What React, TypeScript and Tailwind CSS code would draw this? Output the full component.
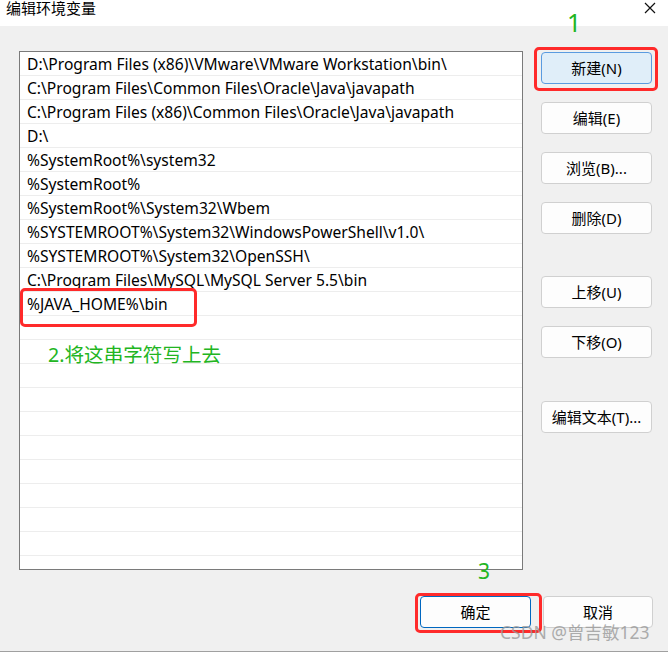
import React from "react";

const rows = [
  "D:\\Program Files (x86)\\VMware\\VMware Workstation\\bin\\",
  "C:\\Program Files\\Common Files\\Oracle\\Java\\javapath",
  "C:\\Program Files (x86)\\Common Files\\Oracle\\Java\\javapath",
  "D:\\",
  "%SystemRoot%\\system32",
  "%SystemRoot%",
  "%SystemRoot%\\System32\\Wbem",
  "%SYSTEMROOT%\\System32\\WindowsPowerShell\\v1.0\\",
  "%SYSTEMROOT%\\System32\\OpenSSH\\",
  "C:\\Program Files\\MySQL\\MySQL Server 5.5\\bin",
  "%JAVA_HOME%\\bin",
  "", "", "", "", "", "", "", "", "", "", "",
];

function Btn({ label, primary, mt }: { label: string; primary?: boolean; mt: string }) {
  return (
    <div
      className={`${mt} h-[32px] w-[111px] rounded-[4px] border flex items-center justify-center text-[15px] text-black ${
        primary ? "bg-[#e0eef9] border-[#5a9be0]" : "bg-[#fdfdfd] border-[#d0d0d0]"
      }`}
    >
      {label}
    </div>
  );
}

export default function App() {
  return (
    <div
      className="relative w-[668px] h-[652px] bg-[#f0f0f0] overflow-hidden border-b border-[#a0a0a0]"
      style={{ fontFamily: '"Noto Sans", "Noto Sans CJK SC", sans-serif' }}
    >
      <div className="h-[26px] bg-white flex items-start justify-between pl-[6px] pr-[12px]">
        <span className="text-[15px] text-black leading-[17px]">编辑环境变量</span>
        <svg width="12" height="12" viewBox="0 0 12 12" className="mt-[2px]">
          <path d="M1 1 L11 11 M11 1 L1 11" stroke="#111" strokeWidth="1.2" />
        </svg>
      </div>
      <div className="flex pl-[19px] pt-[25px]">
        <div className="w-[504px] h-[519px] border border-[#7a7a7a] bg-white overflow-hidden">
          {rows.map((r, i) => (
            <div
              key={i}
              className="h-[24px] border-b border-[#ededed] pl-[7px] pt-[2px] flex items-center text-[15.6px] text-black whitespace-nowrap"
            >
              {r}
            </div>
          ))}
        </div>
        <div className="ml-[18px] flex flex-col">
          <Btn label="新建(N)" primary mt="mt-[1px]" />
          <Btn label="编辑(E)" mt="mt-[18px]" />
          <Btn label="浏览(B)..." mt="mt-[18px]" />
          <Btn label="删除(D)" mt="mt-[18px]" />
          <Btn label="上移(U)" mt="mt-[42px]" />
          <Btn label="下移(O)" mt="mt-[18px]" />
          <Btn label="编辑文本(T)..." mt="mt-[43px]" />
        </div>
      </div>
      <div className="flex justify-end gap-[12px] pr-[15px] mt-[26px]">
        <div className="h-[32px] w-[111px] rounded-[4px] border border-[#0067c0] bg-[#fdfdfd] flex items-center justify-center text-[15px] text-black">
          确定
        </div>
        <div className="h-[32px] w-[110px] rounded-[4px] border border-[#d0d0d0] bg-[#fdfdfd] flex items-center justify-center text-[15px] text-black">
          取消
        </div>
      </div>

      {/* annotations */}
      <div className="absolute left-[534px] top-[47px] w-[124px] h-[44px] border-[3px] border-[#ff2a2a] rounded-[5px]" />
      <div className="absolute left-[20px] top-[288px] w-[177px] h-[39px] border-[3px] border-[#ff2a2a] rounded-[5px]" />
      <div className="absolute left-[415px] top-[593px] w-[127px] h-[40px] border-[3px] border-[#ff2a2a] rounded-[5px]" />
      <div className="absolute left-[567px] top-[10px] text-[25px] leading-none text-[#22b522]">1</div>
      <div className="absolute left-[48px] top-[345px] text-[19.6px] leading-none text-[#22b522]">2.将这串字符写上去</div>
      <div className="absolute left-[478px] top-[561px] text-[21px] leading-none text-[#22b522]">3</div>
      <div className="absolute left-[500px] top-[624px] text-[17.5px] leading-none text-[#9a9a9a] opacity-80 whitespace-nowrap">
        CSDN @曾吉敏123
      </div>
    </div>
  );
}
